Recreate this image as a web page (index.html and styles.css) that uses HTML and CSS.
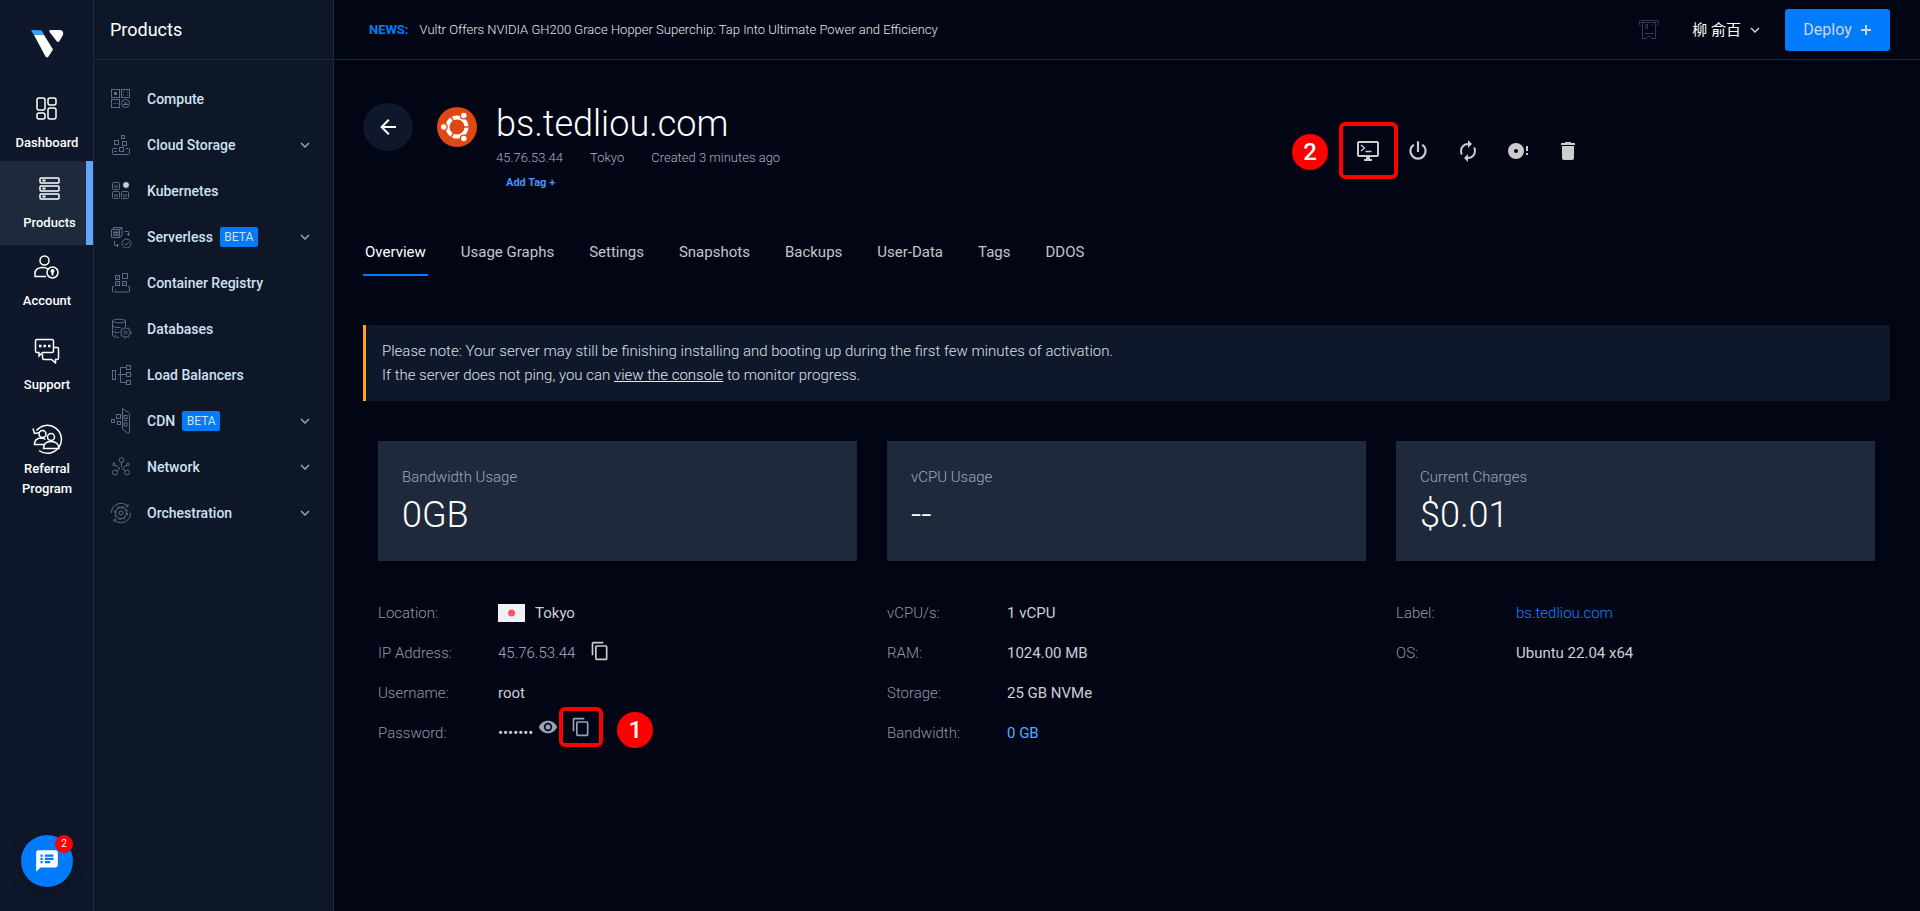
FILE: index.html
```html
<!DOCTYPE html>
<html lang="en">
<head>
    <meta charset="UTF-8">
    <meta name="viewport" content="width=device-width, initial-scale=1.0">
    <title>bs.tedliou.com - Vultr</title>
    <link rel="stylesheet" href="styles.css">
</head>
<body>

<div class="app">
    <nav class="rail">
        <a href="#" class="logo" aria-label="Vultr">
            <svg width="34" height="28" viewBox="0 0 34 28">
                <path d="M1 0h10.500L14 4.500H4z" fill="#007bfc"/>
                <path d="M1 0l3 5h10L11.500 1z" fill="#51b9ff" opacity=".7"/>
                <path d="M4 5h10l9 14.500-4.500 7q-1.500 2-3 0z" fill="#fff"/>
                <path d="M20 0h10.500q3.500 1 2.500 5l-3.500 6q-1.500 2-3 0L19.500 2q-.5-1.500.5-2z" fill="#fff"/>
            </svg>
        </a>
        <ul class="rail-list">
            <li><a href="#" class="rail-item">
                <span class="rail-icon"><svg width="22" height="24" viewBox="0 0 22 24" class="line">
                    <rect x="1" y="1" width="8" height="12" rx="2"/><rect x="12" y="1" width="8" height="7" rx="2"/>
                    <rect x="1" y="16" width="8" height="6" rx="2"/><rect x="12" y="11" width="8" height="11" rx="2"/>
                </svg></span>
                Dashboard
            </a></li>
            <li><a href="#" class="rail-item active">
                <span class="rail-icon"><svg width="22" height="24" viewBox="0 0 22 24" class="line">
                    <rect x="1" y="1" width="19" height="5" rx="1"/><rect x="1" y="9" width="19" height="5" rx="1"/><rect x="1" y="17" width="19" height="5" rx="1"/>
                    <path d="M3.500 3.500h3M3.500 11.500h3M3.500 19.500h3" stroke-width="2"/>
                </svg></span>
                Products
            </a></li>
            <li><a href="#" class="rail-item account">
                <span class="rail-icon"><svg width="26" height="24" viewBox="0 0 26 24" class="line">
                    <circle cx="10.500" cy="5.500" r="4.500"/>
                    <path d="M12 21.500H1v-3q0-6 8-6 3 0 5 1.500"/>
                    <circle cx="18.500" cy="17.500" r="5.500"/>
                    <circle cx="18.500" cy="16" r="2" fill="#fff" stroke="none"/><path d="M18.500 16v4.500" stroke-width="2"/>
                </svg></span>
                Account
            </a></li>
            <li><a href="#" class="rail-item support">
                <span class="rail-icon"><svg width="26" height="26" viewBox="0 0 26 26" class="line">
                    <path d="M3 1.500h15q1.500 0 1.500 1.500v10q0 1.500-1.500 1.500H8.500L5 18v-3.500H3Q1.500 14.500 1.500 13V3q0-1.500 1.500-1.500z"/>
                    <path d="M19.500 9.500h3.500q1.500 0 1.500 1.500v9q0 1.500-1.500 1.500h-1.500v3.500l-4-3.500H10q-1.500 0-1.500-1.500v-4"/>
                    <path d="M5 8h2.500M9.500 8H12M14 8h2.500" stroke-width="2.500"/>
                </svg></span>
                Support
            </a></li>
            <li><a href="#" class="rail-item referral">
                <span class="rail-icon"><svg width="32" height="32" viewBox="0 0 32 32" class="line">
                    <path d="M5.500 7.500A14 14 0 1 1 8 27.500" /><path d="M2 5.500l1.500 5L9 9.500"/>
                    <circle cx="11.500" cy="11" r="3.500"/><circle cx="20" cy="14" r="3.500"/>
                    <path d="M13 21.500H3.500q0-6 6-6.500 3 0 5 1.500M12.500 25.500q0-7 7.500-7t8 7z"/>
                </svg></span>
                Referral<br>Program
            </a></li>
        </ul>
        <button class="chat" aria-label="Open chat">
            <svg width="26" height="26" viewBox="0 0 24 24"><path fill="#fff" d="M20 2H4c-1.100 0-2 .9-2 2v18l4-4h14c1.100 0 2-.9 2-2V4c0-1.100-.9-2-2-2z"/><path fill="#007bfc" d="M6 12h2v2H6zM6 9h2v2H6zM6 6h2v2H6zM10 12h5v2h-5zM10 9h8v2h-8zM10 6h8v2h-8z"/></svg>
            <span class="chat-count">2</span>
        </button>
    </nav>

    <aside class="sidebar">
        <h2 class="sidebar-title">Products</h2>
        <ul class="menu">
            <li><a href="#">
                <svg class="menu-icon" viewBox="0 0 22 22"><rect x="1.500" y="1.500" width="8" height="8"/><rect x="11.500" y="1.500" width="8" height="8"/><rect x="1.500" y="11.500" width="8" height="8"/><circle cx="15.500" cy="15.500" r="4"/><path d="M4 5.500h3M4 4.500h3M4 6.500h3M13 4h1M17 4h1M13 7h1M17 7h1M3.500 15.500h1M5 15.500h1M7 15.500h1M13 16.500h5M14 15h3"/></svg>
                Compute
            </a></li>
            <li><a href="#">
                <svg class="menu-icon" viewBox="0 0 22 22"><rect x="11.500" y="1.500" width="3" height="3"/><rect x="4.500" y="6.500" width="4" height="4"/><rect x="12.500" y="7.500" width="4" height="4"/><rect x="9.500" y="13.500" width="4" height="4"/><path d="M7 14.500H3.500q-1 0-1 1v4q0 1 1 1h15q1 0 1-1v-4q0-1-1-1H16M4 17.500h3"/></svg>
                Cloud Storage
                <svg class="chevron" viewBox="0 0 10 6"><path d="M1 1l4 4 4-4"/></svg>
            </a></li>
            <li><a href="#">
                <svg class="menu-icon" viewBox="0 0 22 22"><rect x="2.500" y="2.500" width="7" height="7" rx="1"/><rect x="2.500" y="11.500" width="7" height="7" rx="1"/><rect x="11.500" y="11.500" width="7" height="7" rx="1"/><path d="M5 5v3M7 5v3M5 14v3M7 14v3M14 14v3M16 14v3"/><circle cx="16" cy="5" r="3" fill="#c5cad8" stroke-dasharray="1 1"/></svg>
                Kubernetes
            </a></li>
            <li><a href="#">
                <svg class="menu-icon" viewBox="0 0 22 22"><path d="M1.500 3.500h8v8h-8zM3.500 3.500v-2h8.500v8l-2.500 2M9.500 3.500L12 1.500M4 5v5M6 5v5M8 5v5M3 6.500h5M3 9h5M14.500 5.500h4v4M17 8l1.500 1.500L20 8M4.500 15v4.500h4M7 18l1.500 1.500L7 21"/><circle cx="16.500" cy="17.500" r="4.500"/><path d="M14.500 17.500l1.500 1.500 3-3"/></svg>
                Serverless
                <span class="beta">BETA</span>
                <svg class="chevron" viewBox="0 0 10 6"><path d="M1 1l4 4 4-4"/></svg>
            </a></li>
            <li><a href="#">
                <svg class="menu-icon" viewBox="0 0 22 22"><rect x="12.500" y="1.500" width="5" height="5"/><rect x="5.500" y="3.500" width="4" height="4"/><rect x="5.500" y="9.500" width="4" height="4"/><rect x="12.500" y="9.500" width="4" height="4"/><path d="M7 5.500h1M7 11.500h1M14 11.500h1M4 14.500H3q-.5 0-.5.5v4q0 1 1 1h15q1 0 1-1v-4q0-.5-.5-.5h-1M5 17.500h1"/></svg>
                Container Registry
            </a></li>
            <li><a href="#">
                <svg class="menu-icon" viewBox="0 0 22 22"><ellipse cx="9" cy="3" rx="6.500" ry="1.800"/><path d="M2.500 3v14q0 2 6.500 2.500M15.500 3v6M2.500 8q2 2 8 1.500M2.500 13q2 2 6 1.500M5 11.500h1M5 17h1"/><circle cx="15.500" cy="14.500" r="4.500"/><circle cx="15.500" cy="14.500" r="5.500" stroke-dasharray="2 2"/><circle cx="15.500" cy="14.500" r="1.500"/></svg>
                Databases
            </a></li>
            <li><a href="#">
                <svg class="menu-icon" viewBox="0 0 22 22"><rect x="2.500" y="6.500" width="3" height="9"/><rect x="16.500" y="1.500" width="4" height="4"/><rect x="16.500" y="8.500" width="4" height="4"/><rect x="16.500" y="16.500" width="4" height="4"/><path d="M8 10.500h8.500M16 3.500h-5.500v15H16"/></svg>
                Load Balancers
            </a></li>
            <li><a href="#">
                <svg class="menu-icon tall" viewBox="0 0 22 28"><path d="M12.500 1.500l6 4q1 1 1 2v16.500q0 3-2 2l-5-4z"/><rect x="1.500" y="12.500" width="3" height="3"/><rect x="6.500" y="7.500" width="4" height="4"/><rect x="7.500" y="14.500" width="3" height="3"/><rect x="14" y="8.500" width="3" height="3"/><rect x="14" y="16" width="3" height="3"/><path d="M14 13.500h3"/></svg>
                CDN
                <span class="beta">BETA</span>
                <svg class="chevron" viewBox="0 0 10 6"><path d="M1 1l4 4 4-4"/></svg>
            </a></li>
            <li><a href="#">
                <svg class="menu-icon" viewBox="0 0 22 22"><circle cx="11.500" cy="4" r="2.300"/><circle cx="4" cy="8.500" r="1.300"/><circle cx="18" cy="8.500" r="1.300"/><circle cx="5" cy="16.500" r="2.500"/><circle cx="17" cy="16.500" r="2.500"/><path d="M11.500 6.500V11M5 9l5 3.500M17 9l-5 3.500M10 12.500l-3.500 2.500M12 12.500l3.500 2.500"/></svg>
                Network
                <svg class="chevron" viewBox="0 0 10 6"><path d="M1 1l4 4 4-4"/></svg>
            </a></li>
            <li><a href="#">
                <svg class="menu-icon" viewBox="0 0 22 22"><circle cx="11" cy="11" r="5.500"/><circle cx="11" cy="11" r="6.500" stroke-dasharray="2.500 2.600"/><circle cx="11" cy="11" r="2"/><path d="M1.500 11A9.500 9.500 0 0 1 18 4.500l-2.500.5M18 4.500V2M20.500 11A9.500 9.500 0 0 1 4 17.500l2.500-.5M4 17.500V20"/></svg>
                Orchestration
                <svg class="chevron" viewBox="0 0 10 6"><path d="M1 1l4 4 4-4"/></svg>
            </a></li>
        </ul>
    </aside>

    <div class="page">
        <header class="topbar">
            <p class="news"><strong>NEWS:</strong><a href="#">Vultr Offers NVIDIA GH200 Grace Hopper Superchip: Tap Into Ultimate Power and Efficiency</a></p>
            <a href="#" class="changelog" aria-label="What's new">
                <svg width="22" height="22" viewBox="0 0 22 22"><path d="M3.500 6.500h-1q-1 0-1-1v-3q0-1 1-1h17q1 0 1 1v3q0 1-1 1h-1M3 3.500h16M4.500 4v15.500h4l2.500-3 2.500 3h4V4M8 5v5M9.500 5v5M13.500 6h2M6.500 14.500h9"/></svg>
            </a>
            <button class="user-menu">柳 俞百
                <svg class="chevron" viewBox="0 0 10 6"><path d="M1 1l4 4 4-4"/></svg>
            </button>
            <button class="deploy">Deploy
                <svg width="12" height="12" viewBox="0 0 12 12"><path d="M6 1v10M1 6h10" stroke="#ccd5e0" stroke-width="2"/></svg>
            </button>
        </header>

        <main class="content">
            <div class="server-head">
                <div class="server-info">
                    <a href="#" class="back" aria-label="Back">
                        <svg width="24" height="24" viewBox="0 0 24 24"><path d="M20 11v2H8l5.500 5.500-1.420 1.420L4.160 12l7.920-7.920L13.500 5.500 8 11z" fill="#fff"/></svg>
                    </a>
                    <svg class="ubuntu" viewBox="0 0 40 40">
                        <circle cx="20" cy="20" r="20" fill="#dd4814"/>
                        <circle cx="20" cy="20" r="9.500" fill="none" stroke="#fff" stroke-width="4"/>
                        <path d="M20 20h14M20 20l-7-12.200M20 20l-7 12.200" stroke="#dd4814" stroke-width="1.500"/>
                        <circle cx="20" cy="20" r="7" fill="#dd4814"/>
                        <g fill="#fff" stroke="#dd4814" stroke-width="1.300"><circle cx="6.700" cy="20" r="3.400"/><circle cx="26.800" cy="8.400" r="3.400"/><circle cx="26.800" cy="31.600" r="3.400"/></g>
                    </svg>
                    <div>
                        <h1>bs.tedliou.com</h1>
                        <p class="meta"><span>45.76.53.44</span><span>Tokyo</span><span>Created 3 minutes ago</span></p>
                        <button class="add-tag">Add Tag +</button>
                    </div>
                </div>
                <div class="actions">
                    <div class="action">
                        <button aria-label="View console"><svg width="24" height="24" viewBox="0 0 24 24"><path d="M21 16H3V4h18m0-2H3c-1.110 0-2 .89-2 2v12a2 2 0 0 0 2 2h7v2H8v2h8v-2h-2v-2h7a2 2 0 0 0 2-2V4a2 2 0 0 0-2-2z"/><path d="M5 6l3.500 3L5 12M9.500 12.500h6" fill="none" stroke="#ccc" stroke-width="1.300"/></svg></button>
                        <span class="mark-box mark-console"></span>
                        <span class="mark-number mark-two">2</span>
                    </div>
                    <div class="action"><button aria-label="Server stop"><svg width="26" height="26" viewBox="0 0 24 24"><path d="M16.560 5.440l-1.450 1.450A5.970 5.970 0 0 1 18 12a6 6 0 0 1-12 0c0-2.170 1.160-4.060 2.880-5.120L7.440 5.440A7.960 7.960 0 0 0 4 12a8 8 0 0 0 16 0c0-2.720-1.360-5.120-3.440-6.560M13 3h-2v10h2"/></svg></button></div>
                    <div class="action"><button aria-label="Server restart"><svg width="24" height="24" viewBox="0 0 24 24"><path d="M12 6v3l4-4-4-4v3a8 8 0 0 0-8 8c0 1.570.46 3.030 1.240 4.260L6.700 14.800A5.870 5.870 0 0 1 6 12a6 6 0 0 1 6-6zm6.760 1.740L17.300 9.200c.44.840.7 1.790.7 2.800a6 6 0 0 1-6 6v-3l-4 4 4 4v-3a8 8 0 0 0 8-8c0-1.570-.46-3.030-1.240-4.260z"/></svg></button></div>
                    <div class="action"><button aria-label="Server reinstall"><svg width="24" height="24" viewBox="0 0 24 24"><path d="M10 14a2 2 0 1 0 0-4 2 2 0 0 0 0 4m0-10a8 8 0 1 1 0 16 8 8 0 0 1 0-16m10 8V7h2v5h-2m0 4v-2h2v2z"/></svg></button></div>
                    <div class="action"><button aria-label="Server destroy"><svg width="24" height="24" viewBox="0 0 24 24"><path d="M19 4h-3.500l-1-1h-5l-1 1H5v2h14M6 19a2 2 0 0 0 2 2h8a2 2 0 0 0 2-2V7H6z"/></svg></button></div>
                </div>
            </div>

            <nav class="tabs">
                <a href="#" class="active">Overview</a>
                <a href="#">Usage Graphs</a>
                <a href="#">Settings</a>
                <a href="#">Snapshots</a>
                <a href="#">Backups</a>
                <a href="#">User-Data</a>
                <a href="#">Tags</a>
                <a href="#">DDOS</a>
            </nav>

            <div class="notice">
                Please note: Your server may still be finishing installing and booting up during the first few minutes of activation.<br>
                If the server does not ping, you can <a href="#">view the console</a> to monitor progress.
            </div>

            <div class="columns">
                <section class="card"><h3>Bandwidth Usage</h3><p>0GB</p></section>
                <section class="card"><h3>vCPU Usage</h3><p>--</p></section>
                <section class="card"><h3>Current Charges</h3><p>$0.01</p></section>
            </div>

            <div class="columns details">
                <dl>
                    <dt>Location:</dt>
                    <dd><svg class="flag" viewBox="0 0 27 18"><path fill="#f0f1f5" d="M0 0h27v18H0z"/><circle cx="13.500" cy="9" r="3.500" fill="#f45567"/></svg>Tokyo</dd>
                    <dt>IP Address:</dt>
                    <dd class="muted">45.76.53.44
                        <button class="copy-ip" aria-label="Copy IP address"><svg width="20" height="20" viewBox="0 0 24 24"><path d="M19 21H8V7h11m0-2H8a2 2 0 0 0-2 2v14a2 2 0 0 0 2 2h11a2 2 0 0 0 2-2V7a2 2 0 0 0-2-2m-3-4H4a2 2 0 0 0-2 2v14h2V3h12z"/></svg></button>
                    </dd>
                    <dt>Username:</dt>
                    <dd>root</dd>
                    <dt>Password:</dt>
                    <dd>•••••••
                        <span class="password-tools">
                            <button aria-label="Show password"><svg width="20" height="20" viewBox="0 0 24 24"><path d="M12 9a3 3 0 1 0 0 6 3 3 0 0 0 0-6m0 8a5 5 0 1 1 0-10 5 5 0 0 1 0 10m0-12.500C7 4.500 2.730 7.610 1 12c1.730 4.390 6 7.500 11 7.500s9.270-3.110 11-7.500c-1.730-4.390-6-7.500-11-7.500z"/></svg></button>
                            <span class="copy-password">
                                <button aria-label="Copy password"><svg width="20" height="20" viewBox="0 0 24 24"><path d="M19 21H8V7h11m0-2H8a2 2 0 0 0-2 2v14a2 2 0 0 0 2 2h11a2 2 0 0 0 2-2V7a2 2 0 0 0-2-2m-3-4H4a2 2 0 0 0-2 2v14h2V3h12z"/></svg></button>
                                <span class="mark-box mark-copy"></span>
                                <span class="mark-number mark-one">1</span>
                            </span>
                        </span>
                    </dd>
                </dl>
                <dl>
                    <dt>vCPU/s:</dt><dd>1 vCPU</dd>
                    <dt>RAM:</dt><dd>1024.00 MB</dd>
                    <dt>Storage:</dt><dd>25 GB NVMe</dd>
                    <dt>Bandwidth:</dt><dd><a href="#" class="light-link">0 GB</a></dd>
                </dl>
                <dl>
                    <dt>Label:</dt><dd><a href="#" class="label-link">bs.tedliou.com</a></dd>
                    <dt>OS:</dt><dd>Ubuntu 22.04 x64</dd>
                </dl>
            </div>
        </main>
    </div>
</div>

</body>
</html>
```
FILE: styles.css
```css
* {
    box-sizing: border-box;
}

body {
    margin: 0;
    background: #020514;
    color: #ccd0d6;
    font-family: Roboto, "Noto Sans CJK TC", sans-serif;
    font-size: 15px;
    line-height: 20px;
}

h1, h2, h3, p, ul, dl, dd {
    margin: 0;
    padding: 0;
    font-weight: 300;
}

ul {
    list-style: none;
}

a {
    color: #007bfc;
    text-decoration: none;
}

button {
    padding: 0;
    border: none;
    background: none;
    color: inherit;
    font: inherit;
    cursor: pointer;
}

svg {
    display: block;
    flex-shrink: 0;
}

.app {
    display: flex;
    min-height: 100vh;
}

/* left rail */
.rail {
    display: flex;
    flex-direction: column;
    flex: 0 0 94px;
    background: #0f172a;
    border-right: 1px solid #1e293b;
}

.logo {
    padding: 30px 0 23px 30px;
}

.rail-item {
    display: block;
    padding: 10px 0 8px 1px;
    color: #fff;
    font-size: 13px;
    font-weight: 500;
    text-align: center;
}

.rail-item.active {
    padding: 10px 0 12px 13px;
    background: #1e293b;
    border-right: 7px solid #60a5fa;
}

.rail-item.account {
    padding: 4px 0 10px 1px;
}

.rail-item.support {
    padding: 12px 0 12px 1px;
}

.rail-item.referral {
    padding: 14px 0 8px 1px;
}

.rail-icon {
    display: flex;
    align-items: center;
    justify-content: center;
    height: 36px;
    margin-bottom: 6px;
}

.referral .rail-icon {
    margin-bottom: 2px;
}

.line {
    fill: none;
    stroke: #fff;
    stroke-width: 1.5;
}

.chat {
    position: relative;
    display: flex;
    align-items: center;
    justify-content: center;
    width: 52px;
    height: 52px;
    margin: auto 0 24px 21px;
    border-radius: 50%;
    background: #007bfc;
    box-shadow: 0 2px 16px rgba(0, 0, 0, 0.2);
}

.chat-count {
    position: absolute;
    top: 0;
    right: 0;
    width: 18px;
    height: 18px;
    border-radius: 50%;
    background: #f00;
    color: #fff;
    font-size: 10px;
    line-height: 18px;
}

/* products sidebar */
.sidebar {
    flex: 0 0 240px;
    background: #0d1728;
    border-right: 1px solid #1e293b;
}

.sidebar-title {
    height: 60px;
    padding-left: 16px;
    border-bottom: 1px solid #1e293b;
    color: #fff;
    font-size: 18px;
    font-weight: 400;
    line-height: 60px;
}

.menu {
    padding-top: 16px;
}

.menu a {
    display: flex;
    align-items: center;
    height: 46px;
    padding: 0 23px 0 16px;
    color: #cfe1f2;
    font-size: 14px;
    font-weight: 500;
}

.menu-icon {
    width: 22px;
    height: 22px;
    margin-right: 15px;
    fill: none;
    stroke: #5f6a83;
    stroke-width: 1;
}

.menu-icon.tall {
    height: 28px;
}

.beta {
    width: 38px;
    height: 20px;
    margin-left: 7px;
    border-radius: 2px;
    background: #007bfc;
    color: #cfe1f2;
    font-size: 12px;
    font-weight: 400;
    text-align: center;
}

.chevron {
    width: 10px;
    height: 6px;
    margin-left: auto;
    fill: none;
    stroke: #94a3b8;
    stroke-width: 1.5;
}

/* top bar */
.page {
    flex: 1;
    min-width: 0;
}

.topbar {
    display: flex;
    align-items: center;
    height: 60px;
    padding: 0 30px 0 35px;
    border-bottom: 1px solid #1e293b;
}

.news {
    flex: 1;
    font-size: 13px;
}

.news strong {
    margin-right: 11px;
    color: #007bfc;
    font-weight: 700;
}

.news a {
    color: #e6e8ec;
}

.changelog {
    margin-right: 32px;
    fill: none;
    stroke: #343a50;
}

.user-menu {
    display: flex;
    align-items: center;
    gap: 9px;
    margin-right: 25px;
    color: #fff;
    font-weight: 400;
}

.user-menu .chevron {
    stroke: #ccd0d6;
}

.deploy {
    display: flex;
    align-items: center;
    justify-content: center;
    gap: 8px;
    width: 105px;
    height: 42px;
    border-radius: 3px;
    background: #007bfc;
    color: #ccd5e0;
    font-size: 16px;
}

/* server header */
.content {
    padding: 43px 30px 40px 29px;
}

.server-head {
    display: grid;
    grid-template-columns: 43fr 24fr;
}

.server-info {
    display: flex;
    align-items: flex-start;
}

.back {
    display: flex;
    align-items: center;
    justify-content: center;
    width: 50px;
    height: 48px;
    border-radius: 50%;
    background: #0f172a;
}

.ubuntu {
    width: 40px;
    height: 40px;
    margin: 4px 19px 0 24px;
}

h1 {
    color: #fff;
    font-size: 36px;
    line-height: 42px;
}

.meta {
    display: flex;
    gap: 27px;
    margin-top: 3px;
    color: #a3b1c4;
    font-size: 13px;
}

.add-tag {
    display: block;
    margin: 5px 0 0 10px;
    color: #4b93ff;
    font-size: 11px;
    font-weight: 700;
}

.actions {
    display: flex;
    padding-top: 23px;
}

.action {
    position: relative;
    width: 50px;
    height: 50px;
}

.action button {
    display: flex;
    align-items: center;
    justify-content: center;
    width: 50px;
    height: 50px;
    fill: #ccc;
}

/* numbered markers over the buttons */
.mark-box {
    position: absolute;
    border: 4px solid #f00;
    border-radius: 6px;
    pointer-events: none;
}

.mark-number {
    position: absolute;
    width: 36px;
    height: 36px;
    border-radius: 50%;
    background: #f00;
    color: #fff;
    font-size: 24px;
    font-weight: 500;
    line-height: 36px;
    text-align: center;
}

.mark-console {
    top: -4px;
    left: -4px;
    width: 59px;
    height: 57px;
}

.mark-two {
    top: 8px;
    left: -51px;
}

.mark-copy {
    top: -10px;
    left: -12px;
    width: 44px;
    height: 40px;
}

.mark-one {
    top: -5px;
    left: 46px;
}

/* tabs */
.tabs {
    display: flex;
    gap: 31px;
    margin-top: 37px;
}

.tabs a {
    padding: 12px 2px 12px;
    border-bottom: 2px solid transparent;
    color: #c2c6cd;
    font-weight: 400;
}

.tabs a.active {
    border-color: #007bfc;
    color: #fff;
}

.notice {
    margin-top: 49px;
    padding: 14px 16px;
    border-left: 3px solid #ffa31a;
    background: #0f172a;
    color: #dde0e5;
    font-weight: 300;
    line-height: 24px;
}

.notice a {
    color: #e6e8ec;
    text-decoration: underline;
}

.columns {
    display: grid;
    grid-template-columns: repeat(3, 1fr);
    gap: 30px;
    margin: 40px 15px 0;
}

.card {
    padding: 26px 24px;
    background: #1e293b;
}

.card h3 {
    color: #9aabc0;
    font-size: 15px;
}

.card p {
    margin-top: 8px;
    color: #fff;
    font-size: 36px;
    line-height: 40px;
}

/* server details */
.details {
    margin-top: 32px;
}

.details dl {
    display: grid;
    grid-template-columns: 120px 1fr;
    grid-auto-rows: 40px;
    align-items: center;
}

.details dt {
    color: #9298a3;
    font-weight: 300;
}

.details dd {
    display: flex;
    align-items: center;
    font-weight: 400;
}

.details .muted {
    color: #a3b1c4;
    font-weight: 300;
}

.details button {
    display: block;
    fill: #94a3b8;
}

.details .copy-ip {
    margin: 0 0 4px 15px;
    fill: #ccc;
}

.light-link {
    color: #4bb0ff;
}

.label-link {
    color: #0f84ff;
    font-weight: 300;
}

.flag {
    width: 27px;
    height: 18px;
    margin-right: 10px;
}

.password-tools {
    display: flex;
    gap: 13px;
    margin: 0 0 12px 5px;
}

.copy-password {
    position: relative;
}
```
